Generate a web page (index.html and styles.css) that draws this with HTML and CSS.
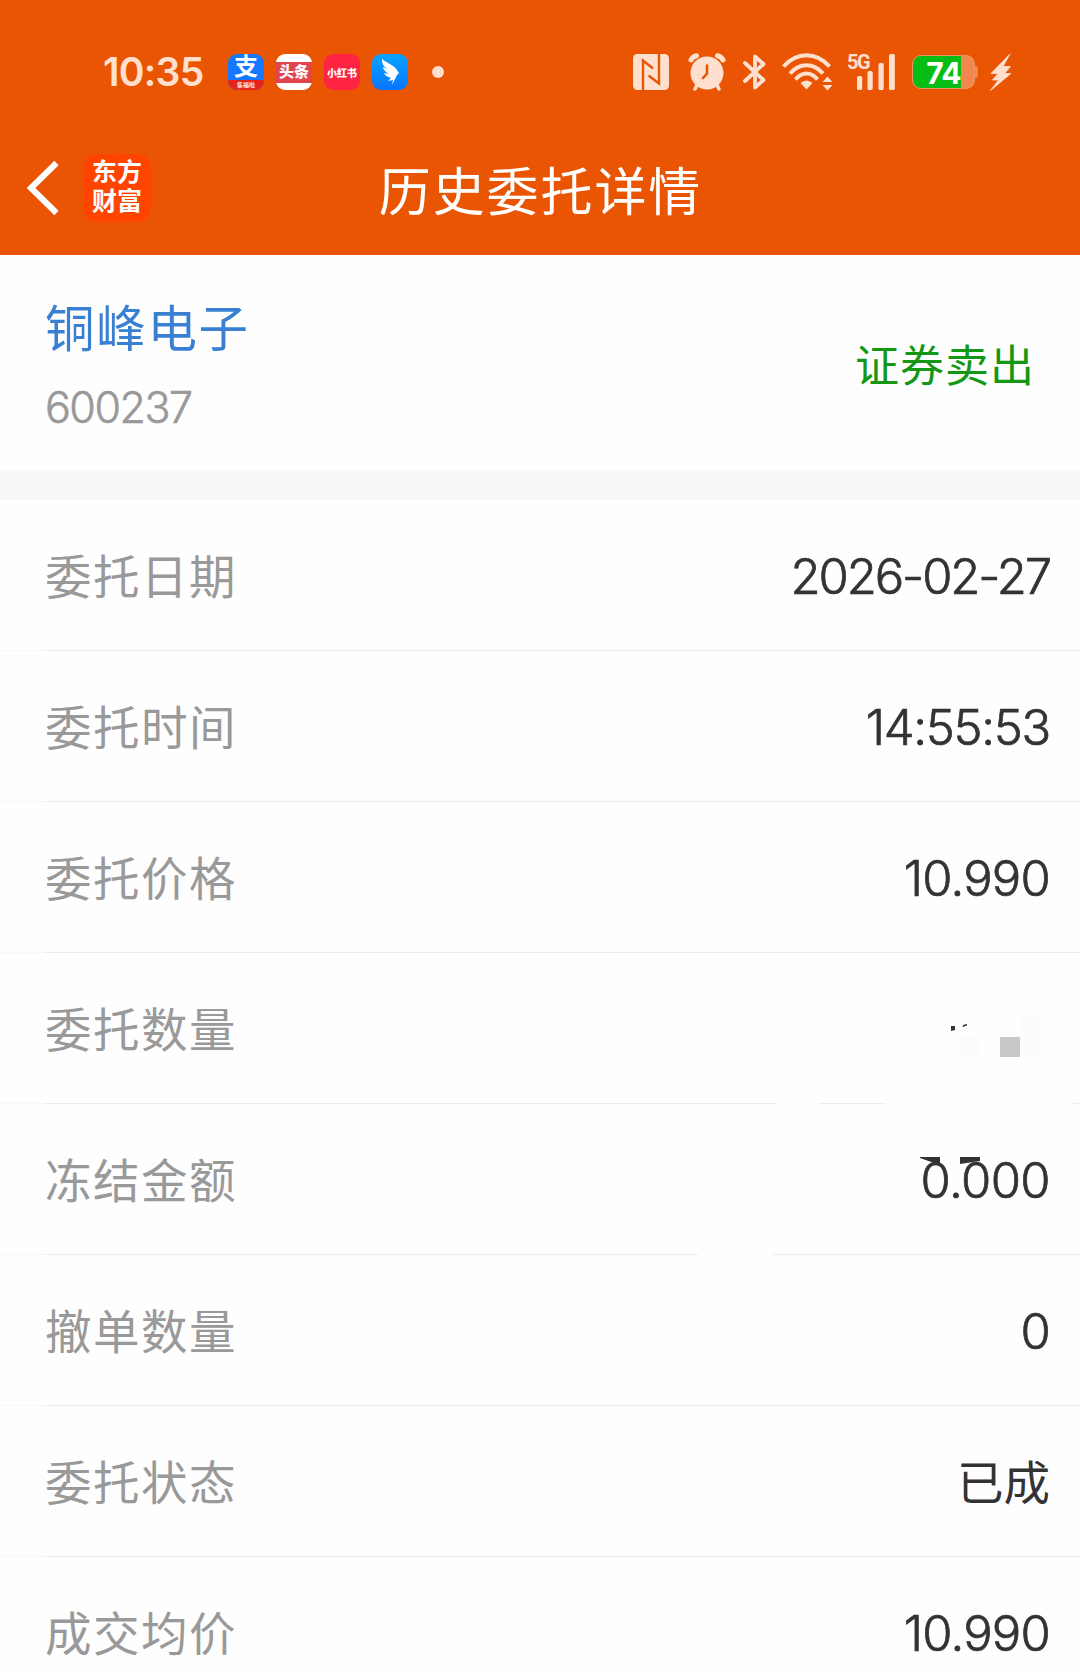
FILE: index.html
```html
<!DOCTYPE html>
<html lang="zh-CN">
<head>
  <meta charset="UTF-8" />
  <meta name="viewport" content="width=device-width, initial-scale=1" />
  <title>历史委托详情</title>
  <link rel="stylesheet" href="styles.css">
</head>
<body>
  <header class="header">
    <div class="status-bar">
      <span class="clock">10:35</span>
      <div class="apps">
        <div class="app app-alipay"><span class="app-glyph">支</span><span class="app-ribbon">集福啦</span></div>
        <div class="app app-toutiao"><span>头条</span></div>
        <div class="app app-red"><span>小红书</span></div>
        <div class="app app-bird">
          <svg width="36" height="36" viewBox="0 0 36 36"><path d="M10 5C15 9 22 11 25 16L27 19L25 21L20 31L21 26L16 27L19 24C15 23 13 21 12 19L17 20C13 18 11 15 11 13L15 15C11 12 10 9 10 5Z" fill="#fff"/></svg>
        </div>
      </div>
      <span class="more-dot"></span>

      <div class="indicators">
        <svg class="nfc" width="36" height="36" viewBox="0 0 36 36">
          <rect width="36" height="36" rx="4.5" fill="#ffe0cf"/>
          <path d="M10 36V6.500L20 14.500M26 0V29.500L15.500 21.500" fill="none" stroke="#ea5504" stroke-width="2.400"/>
        </svg>
        <svg class="alarm" width="38" height="38" viewBox="0 0 38 38">
          <g fill="none" stroke="#ffe0cf" stroke-linecap="round">
            <path d="M3 7Q4.500 3.500 8.500 2.700M29.500 2.700Q33.500 3.500 35 7" stroke-width="5"/>
            <path d="M9 32L7 36M29 32L31 36" stroke-width="3.500"/>
          </g>
          <circle cx="19" cy="20" r="16.500" fill="#ffe0cf"/>
          <path d="M19 12.500V20.500L15 25" fill="none" stroke="#ea5504" stroke-width="2.600" stroke-linecap="round"/>
        </svg>
        <svg class="bluetooth" width="24" height="38" viewBox="0 0 24 38">
          <path d="M2 10L20.500 27L12 34.500V3.500L20.500 11L2 28" fill="none" stroke="#ffe0cf" stroke-width="3.800" stroke-linejoin="round" stroke-linecap="round"/>
        </svg>
        <svg class="wifi" width="52" height="38" viewBox="0 0 52 38">
          <g fill="none" stroke="#ffe0cf" stroke-width="4">
            <path d="M1.500 13.500C15-1.500 34-1.500 47.500 13.500"/>
            <path d="M8 20.500C17.500 9.500 31.500 9.500 41 20.500"/>
            <path d="M13.500 26.500C20 18.500 29 18.500 35.500 26.500"/>
          </g>
          <path d="M18.500 30Q24.500 25 30.500 30L24.500 36.500Z" fill="#ffe0cf"/>
          <path d="M40.500 29L45.500 23.500L50.500 29ZM40.500 32H50.500L45.500 37.500Z" fill="#ffe0cf"/>
        </svg>
        <div class="signal">
          <span class="signal-type">5G</span>
          <svg width="48" height="36" viewBox="0 0 48 36">
            <g fill="#ffe0cf">
              <rect x="10" y="22" width="5.200" height="14" rx="1.500"/>
              <rect x="20.500" y="17" width="5.200" height="19" rx="1.500"/>
              <rect x="31.500" y="9" width="5.200" height="27" rx="1.500"/>
              <rect x="42" y="0" width="5.800" height="36" rx="1.500"/>
            </g>
          </svg>
        </div>
        <div class="battery"><span>74</span></div>
        <svg class="bolt" width="21" height="37" viewBox="0 0 21 37"><path d="M20 0L1 19.500H8L2.500 26H8.500L0.500 36.500L21 19.500H14.500L20.500 12.500H13Z" fill="#ffe0cf" stroke="#ffe0cf" stroke-width="0.800"/></svg>
      </div>
    </div>

    <div class="title-bar">
      <svg class="back" width="34" height="56" viewBox="0 0 34 56"><path d="M30.500 3L5 28L30.500 53" fill="none" stroke="#fff" stroke-width="6"/></svg>
      <div class="brand"><span>东方</span><span>财富</span></div>
      <h1>历史委托详情</h1>
    </div>
  </header>

  <section class="stock">
    <div>
      <h2>铜峰电子</h2>
      <p class="code">600237</p>
    </div>
    <span class="side">证券卖出</span>
  </section>

  <ul class="details">
    <li class="row"><span class="label">委托日期</span><span class="value date">2026-02-27</span></li>
    <li class="row"><span class="label">委托时间</span><span class="value time">14:55:53</span></li>
    <li class="row"><span class="label">委托价格</span><span class="value">10.990</span></li>
    <li class="row row-quantity">
      <span class="label">委托数量</span>
      <svg class="mask" width="100" height="40" viewBox="0 0 100 40">
        <path d="M6 9H10V13L6 14ZM18 8L22 7V8.500L17.500 10Z" fill="#333"/>
        <rect x="15" y="20" width="20" height="20" fill="#fcfcfc"/>
        <rect x="75" y="0" width="20" height="40" fill="#fcfcfc"/>
        <rect x="55" y="20" width="20" height="20" fill="#c8c8c8"/>
      </svg>
    </li>
    <li class="row row-frozen">
      <span class="label">冻结金额</span><span class="value frozen">0.000</span>
      <svg class="marks" width="60" height="8" viewBox="0 0 60 8"><path d="M0 0H20V6H14L0 1ZM40 0H60V4L40 7Z" fill="#333"/></svg>
    </li>
    <li class="row"><span class="label">撤单数量</span><span class="value">0</span></li>
    <li class="row"><span class="label">委托状态</span><span class="value state">已成</span></li>
    <li class="row"><span class="label">成交均价</span><span class="value">10.990</span></li>
  </ul>
</body>
</html>
```
FILE: styles.css
```css
* {
  margin: 0;
  padding: 0;
  box-sizing: border-box;
}

body {
  width: 1080px;
  height: 1672px;
  overflow: hidden;
  background: #fefefe;
  font-family: Inter, "Noto Sans CJK SC", sans-serif;
  color: #333;
}

svg {
  display: block;
  flex: none;
}

.header {
  height: 255px;
  background: #ea5504;
  color: #fff;
}

/* status bar */
.status-bar {
  display: flex;
  align-items: flex-start;
  height: 120px;
  padding: 54px 69px 0 103px;
}

.clock {
  width: 125px;
  line-height: 36px;
  font-size: 39px;
  font-weight: 600;
  letter-spacing: -0.7px;
  color: #ffe0cf;
}

.apps {
  display: flex;
  gap: 12px;
}

.app {
  width: 36px;
  height: 36px;
  border-radius: 9px;
  display: flex;
  flex-direction: column;
  align-items: center;
  justify-content: center;
  white-space: nowrap;
  font-weight: 900;
}

.app-alipay {
  background: #1677ff;
  justify-content: flex-start;
}

.app-glyph {
  height: 26px;
  line-height: 25px;
  font-size: 24px;
  font-weight: 700;
}

.app-ribbon {
  width: 36px;
  height: 10px;
  border-radius: 0 0 9px 9px;
  background: #e8221c;
  line-height: 9px;
  font-size: 6px;
  text-align: center;
  font-weight: 500;
}

.app-toutiao {
  background: #fff;
}

.app-toutiao span {
  width: 36px;
  height: 21px;
  background: #e0444c;
  line-height: 20px;
  font-size: 15px;
  text-align: center;
}

.app-red {
  background: #ff2442;
  font-size: 10px;
}

.app-bird {
  background: linear-gradient(#08a4ff, #0876ff);
}

.more-dot {
  width: 12px;
  height: 12px;
  margin: 12px 0 0 24px;
  border-radius: 50%;
  background: #ffe0cf;
}

.indicators {
  display: flex;
  align-items: center;
  height: 36px;
  margin-left: auto;
}

.alarm {
  margin-left: 19px;
}

.bluetooth {
  margin-left: 17px;
}

.wifi {
  margin-left: 15px;
}

.signal {
  position: relative;
  margin-left: 13px;
}

.signal-type {
  position: absolute;
  left: 0;
  top: -2px;
  line-height: 20px;
  font-family: "Roboto", sans-serif;
  font-size: 20px;
  font-weight: 700;
  letter-spacing: -1.5px;
  color: #ffe0cf;
}

.battery {
  position: relative;
  width: 63px;
  height: 34px;
  margin-left: 17px;
  border: 1px solid #f0935f;
  border-radius: 9px;
  background: linear-gradient(90deg, #06bd13 48px, #f28750 48px);
  line-height: 35px;
  font-size: 30px;
  font-weight: 700;
  text-align: center;
  letter-spacing: -0.8px;
}

.battery::after {
  content: "";
  position: absolute;
  right: -4px;
  top: 10px;
  width: 3px;
  height: 12px;
  border-radius: 0 3px 3px 0;
  background: #f28750;
}

.bolt {
  margin-left: 15px;
}

/* title bar */
.title-bar {
  position: relative;
  display: flex;
  align-items: center;
  height: 135px;
  padding-left: 26px;
}

.brand {
  display: flex;
  flex-direction: column;
  align-items: center;
  justify-content: center;
  width: 68px;
  height: 68px;
  margin-left: 23px;
  padding-bottom: 1px;
  border-radius: 14px;
  background: #ff4400;
  font-size: 25px;
  font-weight: 700;
  line-height: 29px;
}

.title-bar h1 {
  position: absolute;
  left: 1px;
  right: 0;
  top: 35px;
  text-align: center;
  line-height: 76px;
  font-size: 52px;
  font-weight: 400;
  letter-spacing: 1.9px;
}

/* stock summary */
.stock {
  display: flex;
  align-items: center;
  justify-content: space-between;
  height: 215px;
  padding: 0 45px;
}

.stock h2 {
  margin-top: 4px;
  line-height: 72px;
  font-size: 49.5px;
  font-weight: 400;
  letter-spacing: 1.7px;
  color: #3a80d2;
}

.stock .code {
  margin-top: 12px;
  line-height: 60px;
  font-size: 43px;
  font-weight: 300;
  letter-spacing: -1.5px;
  -webkit-text-stroke: 0.6px;
  color: #999;
}

.side {
  font-size: 44px;
  letter-spacing: 1px;
  color: #149714;
}

/* order details */
.details {
  list-style: none;
  border-top: 30px solid #f6f8fa;
}

.row {
  position: relative;
  display: flex;
  align-items: center;
  justify-content: space-between;
  height: 151px;
  padding: 0 30px 0 45px;
  background: linear-gradient(90deg, #f8f8f8 45px, #ececec 45px) bottom / 100% 1px no-repeat;
}

.row-quantity {
  background-image: linear-gradient(90deg, #f8f8f8 45px, #ececec 45px 776px, transparent 776px 819px, #ececec 819px 886px, transparent 886px 1073px, #ececec 1073px);
}

.row-frozen {
  background-image: linear-gradient(90deg, #f8f8f8 45px, #ececec 45px 698px, transparent 698px 773px, #ececec 773px);
}

.label {
  padding-bottom: 5px;
  font-size: 46.5px;
  letter-spacing: 1.5px;
  color: #999;
}

.value {
  padding-top: 2px;
  font-size: 49px;
  font-weight: 300;
  letter-spacing: -0.8px;
  -webkit-text-stroke: 0.7px;
}

.date {
  letter-spacing: -2.1px;
}

.time {
  letter-spacing: -1.3px;
}

.frozen {
  letter-spacing: -0.6px;
}

.state {
  padding: 0 0 4px;
  font-size: 46.5px;
  font-weight: 400;
  letter-spacing: 0;
  -webkit-text-stroke: 0;
}

.mask {
  position: absolute;
  left: 945px;
  top: 64px;
}

.marks {
  position: absolute;
  left: 920px;
  top: 53px;
}
```
